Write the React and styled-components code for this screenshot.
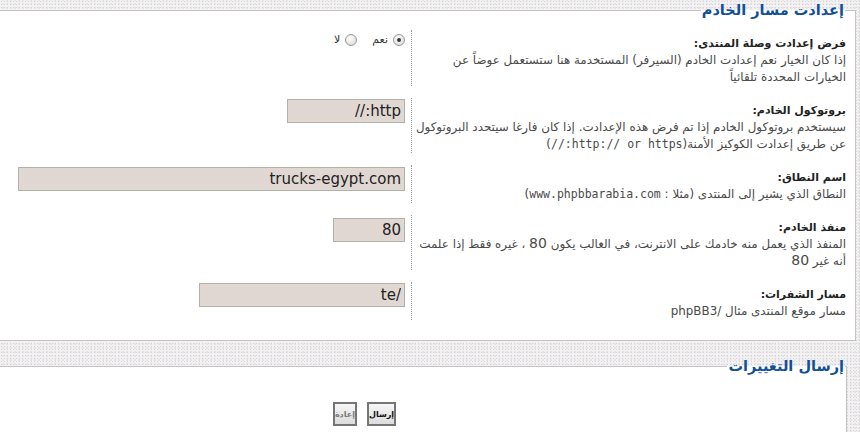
import React from 'react';
import styled, { createGlobalStyle } from 'styled-components';

const GlobalStyle = createGlobalStyle`
  html, body {
    margin: 0;
    padding: 0;
  }
  body {
    overflow: hidden;
    font-family: "DejaVu Sans", sans-serif;
    background-color: #f3f1f3;
    background-image:
      radial-gradient(circle, #dccfd9 0.6px, transparent 0.9px),
      radial-gradient(circle, #d6e2d3 0.6px, transparent 0.9px);
    background-size: 3px 3px, 4px 4px;
    background-position: 0 0, 1px 2px;
  }
`;

const Page = styled.div`
  direction: rtl;
  width: 860px;
  height: 432px;
  overflow: hidden;
`;

const Fieldset = styled.fieldset`
  box-sizing: border-box;
  width: ${(p) => p.$width}px;
  margin: ${(p) => p.$top}px ${(p) => p.$right}px 0 0;
  padding: ${(p) => p.$padTop}px ${(p) => p.$padRight}px ${(p) => p.$padBottom}px 0;
  border: 1px solid #c4c4c4;
  background: #fff;
  min-inline-size: auto;
`;

const Legend = styled.legend`
  padding: 0 1px;
  margin-right: 1px;
  font-family: "DejaVu Sans", sans-serif;
  font-weight: bold;
  font-size: 14.5px;
  line-height: 20px;
  color: #115098;
`;

const Row = styled.dl`
  display: flex;
  margin: 0 0 12px;
`;

const Term = styled.dt`
  box-sizing: border-box;
  width: 435px;
  flex: none;
  padding: ${(p) => p.$padTop || 4}px 0 0;
  border-left: 1px dotted #9c9c9c;
  font-size: 11.9px;
  line-height: 17px;
`;

const Title = styled.label`
  display: block;
  font-weight: bold;
  font-size: 11px;
  color: #222;
`;

const Explain = styled.span`
  display: block;
  color: #4a4a4a;
`;

const Mono = styled.samp`
  font-family: "DejaVu Sans Mono", monospace;
  font-size: 11.5px;
`;

const Num = styled.span`
  font-size: 14px;
  line-height: 0;
`;

const Detail = styled.dd`
  flex: 1;
  margin: 0;
  padding: ${(p) => p.$padTop || 2}px 6px 0 0;
`;

const Field = styled.input`
  box-sizing: border-box;
  width: ${(p) => p.$width}px;
  height: 24px;
  padding: 0 3px;
  border: 1px solid #b2b2a8;
  direction: rtl;
  text-align: right;
  font-family: "DejaVu Sans", sans-serif;
  font-size: 15px;
  color: #222;
  background-color: #ece5e1;
  background-image: radial-gradient(circle, #dcd0cb 0.6px, transparent 0.9px);
  background-size: 2px 2px;
  outline: none;
`;

const RadioGroup = styled.div`
  display: flex;
  align-items: center;
  gap: 15px;
  padding-top: 1px;
`;

const RadioLabel = styled.label`
  display: flex;
  align-items: center;
  gap: 5px;
  font-size: 11px;
  color: #333;
`;

const Radio = styled.span`
  position: relative;
  width: 12px;
  height: 12px;
  box-sizing: border-box;
  border-radius: 50%;
  border: 1px solid #9a9a9a;
  background: radial-gradient(circle at 40% 35%, #ffffff, #d4d4d4);

  &::after {
    content: '';
    display: ${(p) => (p.$checked ? 'block' : 'none')};
    position: absolute;
    left: 3px;
    top: 3px;
    width: 4px;
    height: 4px;
    border-radius: 50%;
    background: #3a3a3a;
  }
`;

const Actions = styled.div`
  display: flex;
  justify-content: center;
  gap: 10px;
  padding-top: 26px;
`;

const Button = styled.button`
  height: 24px;
  padding: 0;
  border: 2px solid #757575;
  background: linear-gradient(#f6f6f6, #dcdcdc);
  font-family: "DejaVu Sans", sans-serif;
  font-weight: bold;
  font-size: 8px;
  color: ${(p) => (p.$muted ? '#7a7a7a' : '#111')};
`;

const App = () => (
  <Page>
    <GlobalStyle />
    <Fieldset $width={982} $right={4} $top={0} $padTop={10} $padRight={9} $padBottom={8}>
      <Legend>إعدادت مسار الخادم</Legend>

      <Row>
        <Term $padTop={5}>
          <Title>فرض إعدادت وصلة المنتدى:</Title>
          <Explain>
            إذا كان الخيار نعم إعدادت الخادم (السيرفر) المستخدمة هنا ستستعمل عوضاً عن
            الخيارات المحددة تلقائياً
          </Explain>
        </Term>
        <Detail>
          <RadioGroup>
            <RadioLabel>
              <Radio $checked />
              نعم
            </RadioLabel>
            <RadioLabel>
              <Radio />
              لا
            </RadioLabel>
          </RadioGroup>
        </Detail>
      </Row>

      <Row>
        <Term>
          <Title>بروتوكول الخادم:</Title>
          <Explain>
            سيستخدم بروتوكول الخادم إذا تم فرض هذه الإعدادت. إذا كان فارغا سيتحدد البروتوكول
            عن طريق إعدادت الكوكيز الأمنة(<Mono>http:// or https://</Mono>)
          </Explain>
        </Term>
        <Detail $padTop={1}>
          <Field $width={118} defaultValue="http://" />
        </Detail>
      </Row>

      <Row>
        <Term>
          <Title>اسم النطاق:</Title>
          <Explain>
            النطاق الذي يشير إلى المنتدى (مثلا : <Mono>www.phpbbarabia.com</Mono>)
          </Explain>
        </Term>
        <Detail>
          <Field $width={387} defaultValue="trucks-egypt.com" />
        </Detail>
      </Row>

      <Row>
        <Term>
          <Title>منفذ الخادم:</Title>
          <Explain>
            المنفذ الذي يعمل منه خادمك على الانترنت، في الغالب يكون <Num>80</Num> ، غيره فقط
            إذا علمت أنه غير <Num>80</Num>
          </Explain>
        </Term>
        <Detail $padTop={3}>
          <Field $width={72} defaultValue="80" />
        </Detail>
      </Row>

      <Row>
        <Term>
          <Title>مسار الشفرات:</Title>
          <Explain>مسار موقع المنتدى مثال /phpBB3</Explain>
        </Term>
        <Detail $padTop={1}>
          <Field $width={206} defaultValue="/te" />
        </Detail>
      </Row>
    </Fieldset>

    <Fieldset $width={965} $right={13} $top={15} $padTop={0} $padRight={0} $padBottom={20}>
      <Legend>إرسال التغييرات</Legend>
      <Actions>
        <Button type="submit">إرسال</Button>
        <Button type="reset" $muted>
          إعادة
        </Button>
      </Actions>
    </Fieldset>
  </Page>
);

export default App;
